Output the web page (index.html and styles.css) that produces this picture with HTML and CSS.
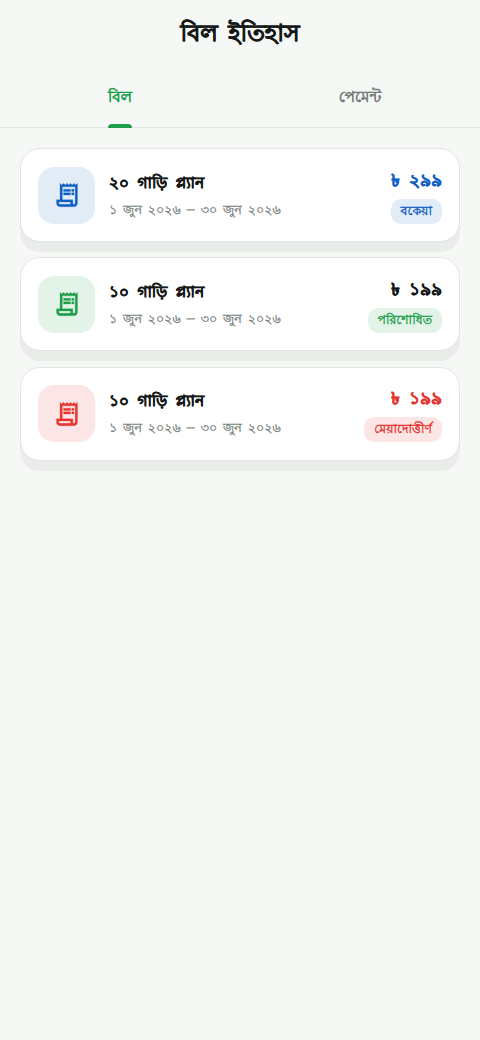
FILE: index.html
```html
<!DOCTYPE html>
<html lang="bn">
<head>
<meta charset="utf-8">
<title>বিল ইতিহাস</title>
<link rel="stylesheet" href="styles.css">
</head>
<body>
<svg class="defs" width="0" height="0"><symbol id="receipt" viewBox="0 0 24 24"><path d="M19.5 3.5L18 2l-1.500 1.500L15 2l-1.500 1.500L12 2l-1.500 1.500L9 2 7.500 3.500 6 2v14H3v3c0 1.660 1.340 3 3 3h12c1.660 0 3-1.340 3-3V2l-1.500 1.500zM15 20H6c-.550 0-1-.450-1-1v-1h10v2zm4-1c0 .550-.450 1-1 1s-1-.450-1-1v-3H8V5h11v14z"/><path d="M9 7h6v2H9zM16 7h2v2h-2zM9 10h6v2H9zM16 10h2v2h-2z"/></symbol></svg>
<header class="header"><h1 class="title">বিল ইতিহাস</h1></header>
<nav class="tabs"><a class="tab tab-active"><span class="tab-label">বিল</span></a><a class="tab"><span class="tab-label">পেমেন্ট</span></a></nav>
<main class="list">
<article class="card due"><div class="icon"><svg><use href="#receipt"/></svg></div><div class="info"><h2 class="plan">২০ গাড়ি প্ল্যান</h2><p class="date">১ জুন ২০২৬ – ৩০ জুন ২০২৬</p></div><div class="side"><strong class="amount">৳ ২৯৯</strong><span class="badge">বকেয়া</span></div></article>
<article class="card paid"><div class="icon"><svg><use href="#receipt"/></svg></div><div class="info"><h2 class="plan">১০ গাড়ি প্ল্যান</h2><p class="date">১ জুন ২০২৬ – ৩০ জুন ২০২৬</p></div><div class="side"><strong class="amount">৳ ১৯৯</strong><span class="badge">পরিশোধিত</span></div></article>
<article class="card overdue"><div class="icon"><svg><use href="#receipt"/></svg></div><div class="info"><h2 class="plan">১০ গাড়ি প্ল্যান</h2><p class="date">১ জুন ২০২৬ – ৩০ জুন ২০২৬</p></div><div class="side"><strong class="amount">৳ ১৯৯</strong><span class="badge">মেয়াদোত্তীর্ণ</span></div></article>
</main>
</body>
</html>
```
FILE: styles.css
```css
*{box-sizing:border-box}
body{margin:0;min-height:1040px;background:#f6f8f6;color:#151817;font-family:"Lohit Bengali","Noto Serif Bengali",FreeSans,FreeSerif,serif}
.defs{display:block}
.header{height:66px;padding-top:3px;display:flex;align-items:center;justify-content:center}
.title{margin:0;font-size:23.500px;line-height:34px;font-weight:700;word-spacing:4px;-webkit-text-stroke:.4px currentColor}
.tabs{display:flex;height:62px;border-bottom:1px solid #e2e6e3}
.tab{flex:1;display:flex;justify-content:center;color:#75807b;font-size:15px;-webkit-text-stroke:.7px currentColor}
.tab-label{position:relative;display:flex;align-items:center;height:61px;padding-top:1px;white-space:nowrap}
.tab-active{color:#1e9e4a}
.tab-active .tab-label::after{content:"";position:absolute;left:0;right:0;bottom:-1px;height:4px;background:#1e9e4a;border-radius:4px 4px 0 0}
.list{display:flex;flex-direction:column;gap:15.400px;padding:20px}
.card{display:flex;align-items:center;height:94px;padding:0 17px;background:#fff;border:1px solid #e2e6e3;border-radius:20px;box-shadow:0 10px #eaecea}
.icon{width:57px;height:57px;border-radius:16px;display:flex;align-items:center;justify-content:center}
.icon svg{width:28px;height:28px;fill:currentColor;stroke:currentColor;stroke-width:.2px}
.info{flex:1;margin-left:14px;padding-top:3px}
.plan{margin:0;font-size:15.300px;line-height:26px;word-spacing:4.300px;-webkit-text-stroke:.4px currentColor}
.date{margin:0;font-size:12.700px;line-height:26px;color:#75807b;word-spacing:2.300px;-webkit-text-stroke:.3px currentColor}
.side{display:flex;flex-direction:column;align-items:flex-end;gap:5px;padding-top:1px}
.amount{font-size:17px;line-height:26px;word-spacing:4.500px;-webkit-text-stroke:.4px currentColor}
.badge{height:25px;line-height:25px;padding:0 10px;border-radius:10px;font-size:12.400px;-webkit-text-stroke:.4px currentColor}
.due .icon,.due .badge{background:#e2ecf7;color:#1060c4}.due .amount{color:#1060c4}
.paid .icon,.paid .badge{background:#e3f3e8;color:#1e9e4a}
.overdue .icon,.overdue .badge{background:#fce6e5;color:#e53530}.overdue .amount{color:#e53530}
```
